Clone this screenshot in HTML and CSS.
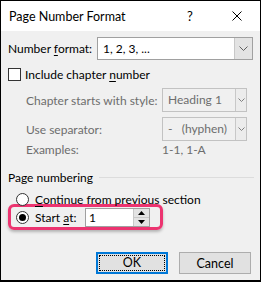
FILE: index.html
```html
<!DOCTYPE html>
<html lang="en">
<head>
    <meta charset="UTF-8">
    <title>Page Number Format</title>
    <link rel="stylesheet" href="styles.css">
</head>
<body>

<div class="dialog">
    <!-- Title bar -->
    <div class="titlebar">
        <span class="title">Page Number Format</span>
        <span class="help">?</span>
        <svg class="close" width="10" height="10" viewBox="0 0 10 10">
            <path d="M0.5 0.5 L9.5 9.5 M9.5 0.5 L0.5 9.5" stroke="#000" stroke-width="1" fill="none"/>
        </svg>
    </div>

    <div class="content">
        <div class="row format-row">
            <span class="label-format">Number <u>f</u>ormat:</span>
            <div class="combo wide">
                <span class="combo-text">1, 2, 3, ...</span>
                <span class="combo-btn">
                    <svg width="9" height="5" viewBox="0 0 9 5"><path d="M0.5 0.5 L4.5 4.5 L8.5 0.5" stroke="#606060" fill="none"/></svg>
                </span>
            </div>
        </div>

        <div class="row check-row">
            <span class="checkbox"></span>
            <span>Include chapter <u>n</u>umber</span>
        </div>

        <div class="row sub-row">
            <span class="sub-label">Chapter starts with style:</span>
            <div class="combo narrow disabled">
                <span class="combo-text">Heading 1</span>
                <span class="combo-btn">
                    <svg width="7" height="4" viewBox="0 0 7 4"><path d="M0.5 0.5 L3.5 3.5 L6.5 0.5" stroke="#808080" fill="none"/></svg>
                </span>
            </div>
        </div>

        <div class="row sub-row">
            <span class="sub-label">Use separator:</span>
            <div class="combo narrow disabled">
                <span class="combo-text">-&nbsp;&nbsp;&nbsp;(hyphen)</span>
                <span class="combo-btn">
                    <svg width="7" height="4" viewBox="0 0 7 4"><path d="M0.5 0.5 L3.5 3.5 L6.5 0.5" stroke="#808080" fill="none"/></svg>
                </span>
            </div>
        </div>

        <div class="row examples-row">
            <span class="sub-label">Examples:</span>
            <span class="examples">1-1, 1-A</span>
        </div>

        <div class="group-title">
            <span>Page numbering</span>
            <span class="group-line"></span>
        </div>

        <div class="row radio-row">
            <span class="radio"></span>
            <span><u>C</u>ontinue from previous section</span>
        </div>

        <div class="highlight">
            <span class="radio checked"></span>
            <span class="start-label">Start <u>a</u>t:</span>
            <div class="spin">
                <span class="spin-text">1</span>
                <span class="spin-btns">
                    <span class="spin-btn"><svg width="7" height="4" viewBox="0 0 7 4"><path d="M0 4 L3.5 0 L7 4 Z" fill="#000"/></svg></span>
                    <span class="spin-btn"><svg width="7" height="4" viewBox="0 0 7 4"><path d="M0 0 L3.5 4 L7 0 Z" fill="#000"/></svg></span>
                </span>
            </div>
        </div>

        <div class="buttons">
            <button class="btn default"><span class="focus">OK</span></button>
            <button class="btn">Cancel</button>
        </div>
    </div>
</div>

</body>
</html>
```

FILE: styles.css
```css
body {
    margin: 0;
    font-family: Lato, "Liberation Sans", sans-serif;
    font-size: 12px;
    color: #000;
}

.dialog {
    width: 261px;
    height: 282px;
    box-sizing: border-box;
    border: 1px solid #000;
    border-bottom-width: 2px;
    background: #f0f0f0;
    white-space: nowrap;
}

.titlebar {
    height: 30px;
    background: #fff;
    display: flex;
    align-items: center;
    padding-left: 8px;
}

.title {
    flex: 1;
    font-size: 12.5px;
}

.help {
    width: 10px;
    font-size: 13px;
    margin-right: 35px;
}

.close {
    margin-right: 18px;
}

.content {
    padding: 6px 6px 0 7px;
}

.row {
    display: flex;
    align-items: center;
}

u {
    text-decoration-thickness: 1px;
    text-underline-offset: 2px;
}

.format-row {
    height: 23px;
}

.label-format {
    width: 89px;
    flex-shrink: 0;
}

.combo {
    display: flex;
    flex-shrink: 0;
    box-sizing: border-box;
    border: 1px solid #a0a0a0;
    background: #fff;
    height: 23px;
}

.combo.wide {
    width: 156px;
}

.combo.narrow {
    width: 85px;
    height: 24px;
    background: #f0f0f0;
    border-color: #c2c2c2;
    color: #6d6d6d;
}

.combo-text {
    flex: 1;
    padding-left: 5px;
    line-height: 21px;
    overflow: hidden;
}

.combo-btn {
    width: 17px;
    flex-shrink: 0;
    display: flex;
    align-items: center;
    justify-content: center;
    background: #e3e3e3;
    border-left: 1px solid #c8c8c8;
}

.narrow .combo-btn {
    width: 10px;
    background: #ececec;
}

.check-row {
    margin-top: 5px;
    height: 18px;
}

.checkbox {
    width: 11px;
    height: 11px;
    border: 1px solid #333;
    background: #fff;
    margin-right: 4px;
}

.sub-row {
    margin-top: 5px;
    height: 24px;
    padding-left: 18px;
}

.sub-label {
    width: 136px;
    flex-shrink: 0;
    color: #6d6d6d;
}

.examples-row {
    margin-top: -2px;
    height: 20px;
    padding-left: 18px;
}

.examples {
    color: #6d6d6d;
}

.group-title {
    display: flex;
    align-items: center;
    margin-top: 9px;
    height: 18px;
}

.group-line {
    flex: 1;
    height: 1px;
    background: #dcdcdc;
    margin-left: 6px;
}

.radio-row {
    margin-top: 4px;
    height: 18px;
    padding-left: 8px;
}

.radio {
    width: 11px;
    height: 11px;
    flex-shrink: 0;
    border: 1px solid #333;
    border-radius: 50%;
    background: #fff;
    margin-right: 6px;
    display: flex;
    align-items: center;
    justify-content: center;
}

.radio.checked::after {
    content: "";
    width: 7px;
    height: 7px;
    border-radius: 50%;
    background: #000;
}

.highlight {
    display: flex;
    align-items: center;
    margin-top: -4px;
    width: 155px;
    height: 26px;
    box-sizing: border-box;
    border: 3px solid #ec3470;
    border-radius: 6px;
    padding-left: 5px;
    box-shadow: 0 2px 3px rgba(0, 0, 0, 0.25);
}

.start-label {
    width: 50px;
    flex-shrink: 0;
}

.spin {
    display: flex;
    flex-shrink: 0;
    box-sizing: border-box;
    width: 65px;
    height: 19px;
    border: 1px solid #a0a0a0;
    background: #fff;
}

.spin-text {
    flex: 1;
    padding-left: 3px;
    line-height: 17px;
}

.spin-btns {
    width: 16px;
    display: flex;
    flex-direction: column;
}

.spin-btn {
    flex: 1;
    display: flex;
    align-items: center;
    justify-content: center;
    background: #e3e3e3;
    border-left: 1px solid #c8c8c8;
}

.spin-btn + .spin-btn {
    border-top: 1px solid #c8c8c8;
}

.buttons {
    display: flex;
    justify-content: flex-end;
    gap: 11px;
    margin-top: 22px;
    padding-right: 3px;
}

.btn {
    font-family: inherit;
    font-size: 12.5px;
    width: 72px;
    height: 22px;
    box-sizing: border-box;
    border: 1px solid #adadad;
    background: #e1e1e1;
    padding: 0;
    color: #000;
}

.btn.default {
    border: 2px solid #0078d7;
    padding: 1px;
}

.btn .focus {
    display: block;
    height: 100%;
    box-sizing: border-box;
    border: 1px dotted #000;
    line-height: 14px;
}
```
